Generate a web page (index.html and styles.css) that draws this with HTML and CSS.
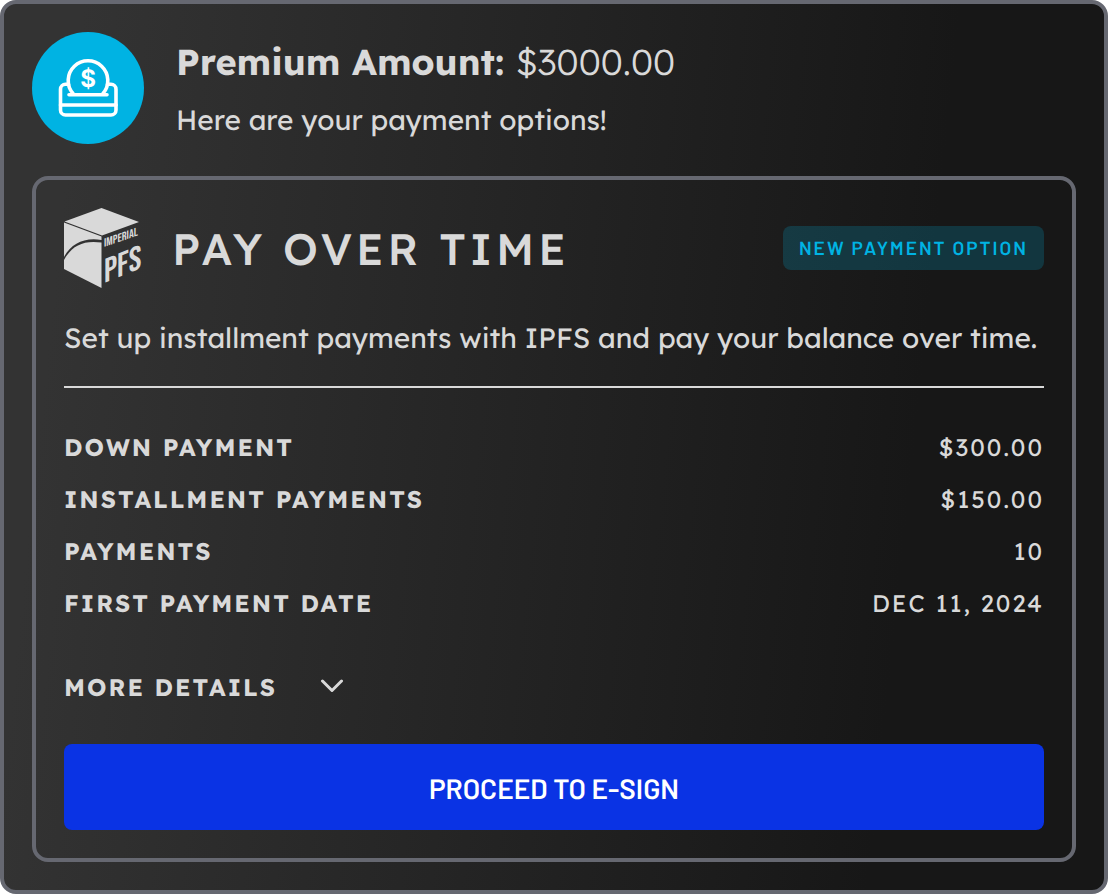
FILE: index.html
```html
<!DOCTYPE html>
<html lang="en">
<head>
  <meta charset="UTF-8" />
  <title>Payment Options</title>
  <meta name="viewport" content="width=device-width, initial-scale=1" />
  <link rel="stylesheet" href="styles.css">
</head>
<body>
  <main class="panel">
    <header class="panel-header">
      <div class="panel-icon">
        <svg width="64" height="64" viewBox="0 0 64 64" fill="none" stroke="#fff" stroke-width="3.6" stroke-linecap="round" stroke-linejoin="round" aria-hidden="true">
          <path d="M17 37.5A19.8 19.8 0 1 1 47 37.5" />
          <path d="M12.5 28.3H9.5A5 5 0 0 0 4.5 33.3V54A5 5 0 0 0 9.5 59H55A5 5 0 0 0 60 54V33.3A5 5 0 0 0 55 28.3H51.5" />
          <path d="M13 38.7H51" />
          <path d="M4.5 49H60" />
          <text class="coin-sign" x="32" y="31" text-anchor="middle">$</text>
        </svg>
      </div>
      <div class="panel-heading">
        <h1>Premium Amount: <span>$3000.00</span></h1>
        <p>Here are your payment options!</p>
      </div>
    </header>

    <section class="option-card">
      <div class="option-header">
        <svg class="option-logo" width="76" height="80" viewBox="0 0 76 80" fill="#d9d9d9" role="img" aria-label="Imperial PFS">
          <path d="M0.5 13.5L37.5 0L75 14L38 27.5Z" />
          <path d="M0 14.5L37.5 28.5V32C20 29 7 36 0 49Z" />
          <path d="M0 52C8 37 20 32 37.5 34.5V80L0 61Z" />
          <g transform="translate(40 39) skewY(-19)">
            <text class="logo-small" x="0" y="0">IMPERIAL</text>
          </g>
          <g transform="translate(40 75) skewY(-22)">
            <text class="logo-large" x="0" y="0">PFS</text>
          </g>
        </svg>
        <h2>Pay Over Time</h2>
        <span class="badge">New Payment Option</span>
      </div>
      <p class="option-text">Set up installment payments with IPFS and pay your balance over time.</p>

      <dl class="terms">
        <div class="term">
          <dt>Down Payment</dt>
          <dd>$300.00</dd>
        </div>
        <div class="term">
          <dt>Installment Payments</dt>
          <dd>$150.00</dd>
        </div>
        <div class="term">
          <dt>Payments</dt>
          <dd>10</dd>
        </div>
        <div class="term">
          <dt>First Payment Date</dt>
          <dd>Dec 11, 2024</dd>
        </div>
      </dl>

      <button type="button" class="more-btn" aria-expanded="false">
        More Details
        <svg width="24" height="16" viewBox="0 0 24 16" fill="none" stroke="#d9d9d9" stroke-width="3" stroke-linecap="round" stroke-linejoin="round" aria-hidden="true">
          <path d="M2.5 2L12 11.5L21.5 2" />
        </svg>
      </button>
      <button type="button" class="proceed-btn">Proceed to E-Sign</button>
    </section>
  </main>
</body>
</html>
```

FILE: styles.css
```css
/* Reset and base */
*, *::before, *::after {
  box-sizing: border-box;
}

body {
  font-family: 'Lexend', 'Inter', 'Open Sans', sans-serif;
  background-color: #ffffff;
  color: #d9d9d9;
  margin: 0;
  text-rendering: geometricPrecision;
}

h1, h2, p, dl, dd {
  margin: 0;
}

button {
  font-family: inherit;
  text-rendering: inherit;
  border: none;
  cursor: pointer;
}

/* Panel */
.panel {
  padding: 28px;
  border: 4px solid #666871;
  border-radius: 16px;
  background: linear-gradient(96deg, #333333 7%, #171717 80%) border-box;
}

.panel-header {
  display: flex;
  align-items: center;
  gap: 32px;
  margin-bottom: 32px;
}

.panel-icon {
  display: flex;
  align-items: center;
  justify-content: center;
  flex-shrink: 0;
  width: 112px;
  height: 112px;
  border-radius: 50%;
  background-color: #00b3e3;
}

.coin-sign {
  fill: #ffffff;
  stroke: none;
  font-family: 'Inter', sans-serif;
  font-size: 24px;
  font-weight: 700;
}

.panel-heading {
  display: flex;
  flex-direction: column;
  gap: 20px;
  padding-top: 4px;
}

.panel-heading h1 {
  font-size: 36px;
  font-weight: 700;
  line-height: 40px;
}

.panel-heading h1 span {
  font-weight: 300;
}

.panel-heading p,
.option-text {
  font-size: 28px;
  font-weight: 400;
  line-height: 36px;
}

/* Payment option */
.option-card {
  padding: 28px;
  border: 4px solid #666871;
  border-radius: 16px;
}

.option-header {
  display: flex;
  align-items: center;
  gap: 32px;
}

.option-logo {
  flex-shrink: 0;
  overflow: visible;
}

.logo-small,
.logo-large {
  font-family: 'Bebas Neue', 'Oswald', 'Barlow Condensed', 'Roboto Condensed', 'Roboto', sans-serif;
}

.logo-small {
  font-size: 12px;
  font-weight: 600;
}

.logo-large {
  font-size: 34px;
  font-weight: 400;
}

.option-header h2 {
  padding-top: 2px;
  font-size: 44px;
  font-weight: 500;
  line-height: 56px;
  letter-spacing: 4px;
  text-transform: uppercase;
}

.badge {
  margin-left: auto;
  padding: 8px 16px;
  border-radius: 8px;
  background-color: rgba(0, 179, 227, 0.2);
  color: #00b3e3;
  font-family: 'Barlow', 'Roboto', sans-serif;
  font-size: 19px;
  font-weight: 600;
  line-height: 28px;
  letter-spacing: 2px;
  text-transform: uppercase;
  white-space: nowrap;
}

.option-text {
  padding: 32px 0 30px;
  border-bottom: 2px solid #d9d9d9;
}

.terms {
  display: flex;
  flex-direction: column;
  gap: 20px;
  margin: 43px 0 52px;
}

.term {
  display: flex;
  justify-content: space-between;
}

.term,
.more-btn {
  font-size: 24px;
  line-height: 32px;
  letter-spacing: 2px;
  text-transform: uppercase;
}

.term dt {
  font-weight: 700;
}

.more-btn {
  display: flex;
  align-items: center;
  gap: 43px;
  padding: 0;
  margin-bottom: 41px;
  background: none;
  color: #d9d9d9;
  font-weight: 700;
}

.proceed-btn {
  display: block;
  width: 100%;
  padding: 26px 16px 24px;
  border-radius: 8px;
  background-color: #0a33e4;
  color: #ffffff;
  font-family: 'Barlow', 'Roboto', sans-serif;
  font-size: 28px;
  font-weight: 600;
  line-height: 36px;
  text-transform: uppercase;
}

.proceed-btn:hover {
  background-color: #0829b8;
}

/* Responsive */
@media (max-width: 768px) {
  .option-header {
    flex-wrap: wrap;
  }
  .badge {
    margin-left: 0;
  }
}
```
